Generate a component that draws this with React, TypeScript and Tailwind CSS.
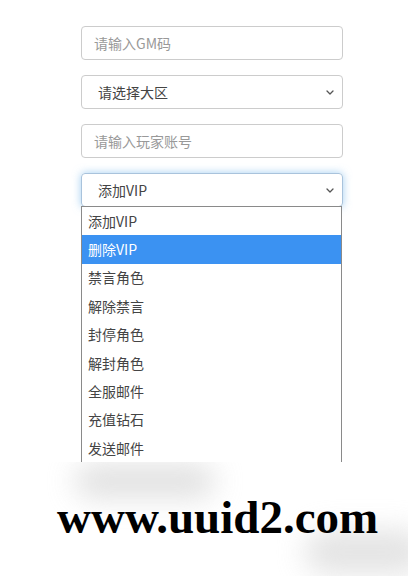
import React from 'react';

const actions = ['添加VIP', '删除VIP', '禁言角色', '解除禁言', '封停角色', '解封角色', '全服邮件', '充值钻石', '发送邮件'];

function Chevron() {
    return (
        <svg width="8" height="5" viewBox="0 0 8 5" className="shrink-0">
            <path d="M1 1l3 3 3-3" fill="none" stroke="#555" strokeWidth="1.3" strokeLinecap="round" strokeLinejoin="round" />
        </svg>
    );
}

export default function App() {
    return (
        <div className="relative w-[413px] h-[576px] bg-white overflow-hidden font-['Noto_Sans_CJK_SC',sans-serif] text-[14px]">
            <div className="flex flex-col gap-[15px] pl-[81px] pt-[26px] w-[343px]">
                {/* GM code */}
                <input
                    readOnly
                    placeholder="请输入GM码"
                    className="h-[34px] w-full border border-[#cccccc] rounded-[4px] px-[12px] text-[14px] text-[#444] placeholder:text-[#999] outline-none"
                />

                {/* Region */}
                <div className="h-[34px] w-full border border-[#cccccc] rounded-[4px] pl-[16px] pr-[8px] flex items-center justify-between text-[#444]">
                    <span>请选择大区</span>
                    <Chevron />
                </div>

                {/* Account */}
                <input
                    readOnly
                    placeholder="请输入玩家账号"
                    className="h-[34px] w-full border border-[#cccccc] rounded-[4px] px-[12px] text-[14px] text-[#444] placeholder:text-[#999] outline-none"
                />

                {/* Action select, open */}
                <div className="relative">
                    <div className="h-[34px] w-full border border-[#a9c3dc] rounded-[4px] pl-[16px] pr-[8px] flex items-center justify-between text-[#444] shadow-[0_0_8px_rgba(102,175,233,0.6)]">
                        <span>添加VIP</span>
                        <Chevron />
                    </div>
                    <ul className="absolute left-0 top-[33px] w-[261px] border-x border-t border-[#8a8a8a] bg-white text-[#444] z-10">
                        {actions.map((a, i) => (
                            <li
                                key={a}
                                className={`h-[28.4px] pl-[6px] flex items-center ${i === 1 ? 'bg-[#3b92f2] text-white' : ''}`}
                            >
                                {a}
                            </li>
                        ))}
                    </ul>
                </div>
            </div>

            {/* watermark band */}
            <div className="absolute left-0 top-[462px] w-[413px] h-[114px] bg-white z-20 overflow-hidden">
                <div className="absolute left-[75px] top-[2px] w-[140px] h-[34px] rounded-full bg-[#d4d4d4] blur-[14px] opacity-70" />
                <div className="absolute left-[305px] top-[68px] w-[120px] h-[44px] rounded-full bg-[#d8d8d8] blur-[14px] opacity-70" />
                <div className="absolute left-[408px] top-0 w-[5px] h-[114px] bg-white" />
                <div className="absolute left-[57px] top-[32px] font-['Liberation_Serif',serif] font-bold text-[47px] leading-none text-black">
                    www.uuid2.com
                </div>
            </div>
        </div>
    );
}
